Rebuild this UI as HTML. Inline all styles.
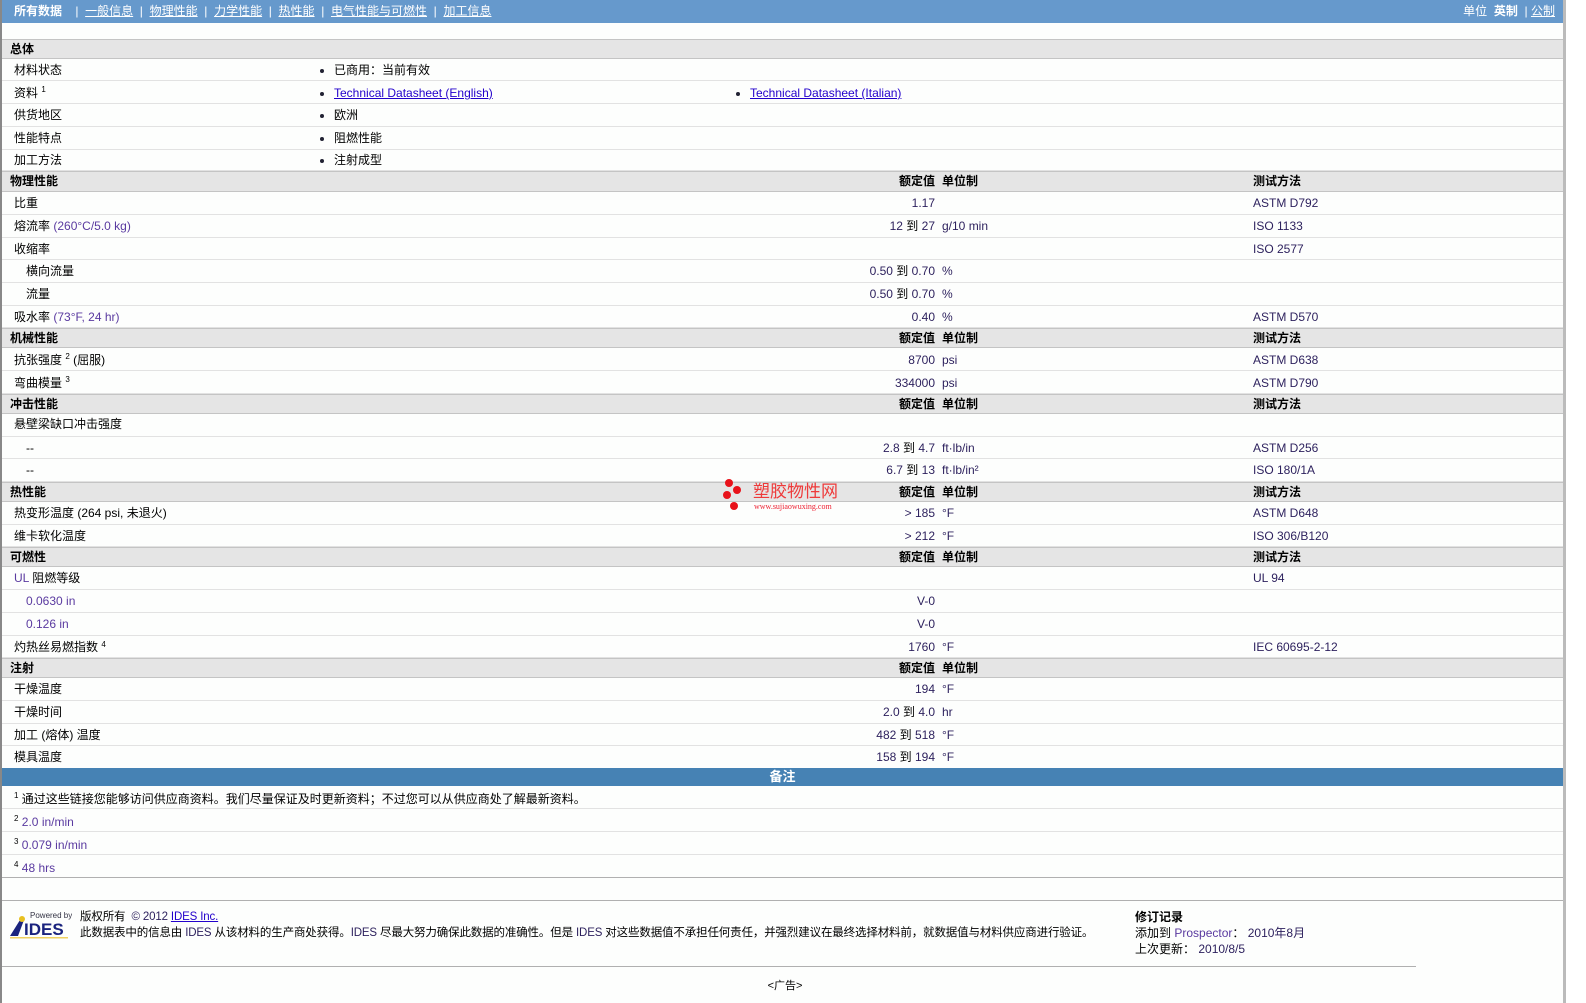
<!DOCTYPE html>
<html><head><meta charset="utf-8">
<style>
*{margin:0;padding:0;box-sizing:border-box}
body{width:1586px;height:1003px;background:#fff;font-family:"Liberation Sans","Noto Sans CJK SC",sans-serif;font-size:12px;color:#000;position:relative;overflow:hidden}
#wrap{position:absolute;left:0;top:0;width:1566px;height:1003px;border-left:2px solid #888;border-right:3px solid #bbb;background:#fdfefd}
.top{position:absolute;left:0;top:0;width:100%;height:23px;background:#6699cc;color:#fff;font-size:12px;line-height:22px}
.top a{color:#fff;text-decoration:underline}
.r{position:absolute;left:0;width:100%;border-bottom:1px solid #e2e2e2;white-space:nowrap}
.r span{position:absolute;top:0}
.s{background:#e5e5e5;border-top:1px solid #c4c4c4;border-bottom:1px solid #c4c4c4;font-weight:bold}
.l{left:12px}
.l2{left:24px}
.b{left:318px}
.b2{left:734px}
.v{right:628px;text-align:right}
.u{left:940px}
.t{left:1251px}
.d{display:inline-block;width:4px;height:4px;border-radius:2px;background:#223;margin-right:10px;vertical-align:middle}
.p{color:#2b1f5c}
.q{color:#5a3aa0}
a.k{color:#2200cc;text-decoration:underline}
sup{font-size:8px;vertical-align:top;position:relative;top:-3px}
</style></head><body>
<div id="wrap">
<div class="top">
<span style="position:absolute;left:12px;font-weight:bold">所有数据</span>
<span style="position:absolute;left:70px">&nbsp;|&nbsp; <a>一般信息</a> &nbsp;|&nbsp; <a>物理性能</a> &nbsp;|&nbsp; <a>力学性能</a> &nbsp;|&nbsp; <a>热性能</a> &nbsp;|&nbsp; <a>电气性能与可燃性</a> &nbsp;|&nbsp; <a>加工信息</a></span>
<span style="position:absolute;right:8px">单位 &nbsp;<b>英制</b> &nbsp;| <a>公制</a></span>
</div>

<div class="r s" style="top:39px;height:20px;line-height:18px"><span class="l" style="left:8px">总体</span></div>
<div class="r" style="top:59px;height:22px;line-height:22px"><span class="l">材料状态</span><span class="b"><i class="d"></i>已商用：当前有效</span></div>
<div class="r" style="top:81px;height:23px;line-height:24px"><span class="l">资料 <sup>1</sup></span><span class="b"><i class="d"></i><a class="k">Technical Datasheet (English)</a></span><span class="b2"><i class="d"></i><a class="k">Technical Datasheet (Italian)</a></span></div>
<div class="r" style="top:104px;height:23px;line-height:22px"><span class="l">供货地区</span><span class="b"><i class="d"></i>欧洲</span></div>
<div class="r" style="top:127px;height:23px;line-height:22px"><span class="l">性能特点</span><span class="b"><i class="d"></i>阻燃性能</span></div>
<div class="r" style="top:150px;height:21px;line-height:21px"><span class="l">加工方法</span><span class="b"><i class="d"></i>注射成型</span></div>

<div class="r s" style="top:171px;height:21px;line-height:19px"><span class="l" style="left:8px">物理性能</span><span class="v">额定值</span><span class="u">单位制</span><span class="t">测试方法</span></div>
<div class="r" style="top:192px;height:23px;line-height:23px"><span class="l">比重</span><span class="v p">1.17</span><span class="t p">ASTM D792</span></div>
<div class="r" style="top:215px;height:23px;line-height:23px"><span class="l">熔流率 <span class="q" style="position:static">(260°C/5.0 kg)</span></span><span class="v p">12 <b style="font-weight:normal;color:#000">到</b> 27</span><span class="u p">g/10 min</span><span class="t p">ISO 1133</span></div>
<div class="r" style="top:238px;height:22px;line-height:22px"><span class="l">收缩率</span><span class="t p">ISO 2577</span></div>
<div class="r" style="top:260px;height:23px;line-height:22px"><span class="l2">横向流量</span><span class="v p">0.50 <b style="font-weight:normal;color:#000">到</b> 0.70</span><span class="u p">%</span></div>
<div class="r" style="top:283px;height:23px;line-height:22px"><span class="l2">流量</span><span class="v p">0.50 <b style="font-weight:normal;color:#000">到</b> 0.70</span><span class="u p">%</span></div>
<div class="r" style="top:306px;height:22px;line-height:22px"><span class="l">吸水率 <span class="q" style="position:static">(73°F, 24 hr)</span></span><span class="v p">0.40</span><span class="u p">%</span><span class="t p">ASTM D570</span></div>

<div class="r s" style="top:328px;height:20px;line-height:18px"><span class="l" style="left:8px">机械性能</span><span class="v">额定值</span><span class="u">单位制</span><span class="t">测试方法</span></div>
<div class="r" style="top:348px;height:23px;line-height:24px"><span class="l">抗张强度 <sup>2</sup> (屈服)</span><span class="v p">8700</span><span class="u p">psi</span><span class="t p">ASTM D638</span></div>
<div class="r" style="top:371px;height:23px;line-height:24px"><span class="l">弯曲模量 <sup>3</sup></span><span class="v p">334000</span><span class="u p">psi</span><span class="t p">ASTM D790</span></div>

<div class="r s" style="top:394px;height:20px;line-height:18px"><span class="l" style="left:8px">冲击性能</span><span class="v">额定值</span><span class="u">单位制</span><span class="t">测试方法</span></div>
<div class="r" style="top:414px;height:23px;line-height:21px"><span class="l">悬壁梁缺口冲击强度</span></div>
<div class="r" style="top:437px;height:22px;line-height:22px"><span class="l2">--</span><span class="v p">2.8 <b style="font-weight:normal;color:#000">到</b> 4.7</span><span class="u p">ft·lb/in</span><span class="t p">ASTM D256</span></div>
<div class="r" style="top:459px;height:23px;line-height:23px"><span class="l2">--</span><span class="v p">6.7 <b style="font-weight:normal;color:#000">到</b> 13</span><span class="u p">ft·lb/in²</span><span class="t p">ISO 180/1A</span></div>

<div class="r s" style="top:482px;height:20px;line-height:18px"><span class="l" style="left:8px">热性能</span><span class="v">额定值</span><span class="u">单位制</span><span class="t">测试方法</span></div>
<div class="r" style="top:502px;height:23px;line-height:22px"><span class="l">热变形温度 (264 psi, 未退火)</span><span class="v p">&gt; 185</span><span class="u p">°F</span><span class="t p">ASTM D648</span></div>
<div class="r" style="top:525px;height:22px;line-height:22px"><span class="l">维卡软化温度</span><span class="v p">&gt; 212</span><span class="u p">°F</span><span class="t p">ISO 306/B120</span></div>

<div class="r s" style="top:547px;height:20px;line-height:18px"><span class="l" style="left:8px">可燃性</span><span class="v">额定值</span><span class="u">单位制</span><span class="t">测试方法</span></div>
<div class="r" style="top:567px;height:23px;line-height:22px"><span class="l"><span class="q" style="position:static">UL</span> 阻燃等级</span><span class="t p">UL 94</span></div>
<div class="r" style="top:590px;height:23px;line-height:23px"><span class="l2 q">0.0630 in</span><span class="v p">V-0</span></div>
<div class="r" style="top:613px;height:23px;line-height:23px"><span class="l2 q">0.126 in</span><span class="v p">V-0</span></div>
<div class="r" style="top:636px;height:22px;line-height:23px"><span class="l">灼热丝易燃指数 <sup>4</sup></span><span class="v p">1760</span><span class="u p">°F</span><span class="t p">IEC 60695-2-12</span></div>

<div class="r s" style="top:658px;height:20px;line-height:18px"><span class="l" style="left:8px">注射</span><span class="v">额定值</span><span class="u">单位制</span></div>
<div class="r" style="top:678px;height:23px;line-height:23px"><span class="l">干燥温度</span><span class="v p">194</span><span class="u p">°F</span></div>
<div class="r" style="top:701px;height:23px;line-height:23px"><span class="l">干燥时间</span><span class="v p">2.0 <b style="font-weight:normal;color:#000">到</b> 4.0</span><span class="u p">hr</span></div>
<div class="r" style="top:724px;height:22px;line-height:22px"><span class="l">加工 (熔体) 温度</span><span class="v p">482 <b style="font-weight:normal;color:#000">到</b> 518</span><span class="u p">°F</span></div>
<div class="r" style="top:746px;height:22px;line-height:22px;border-bottom:none"><span class="l">模具温度</span><span class="v p">158 <b style="font-weight:normal;color:#000">到</b> 194</span><span class="u p">°F</span></div>

<div style="position:absolute;left:0;top:768px;width:100%;height:18px;background:#4682b4;color:#fff;font-weight:bold;text-align:center;line-height:17px;font-size:13px">备注</div>
<div class="r" style="top:786px;height:23px;line-height:26px"><span class="l"><sup>1</sup> 通过这些链接您能够访问供应商资料。我们尽量保证及时更新资料；不过您可以从供应商处了解最新资料。</span></div>
<div class="r" style="top:809px;height:23px;line-height:26px"><span class="l"><sup>2</sup> <span class="q" style="position:static">2.0 in/min</span></span></div>
<div class="r" style="top:832px;height:23px;line-height:26px"><span class="l"><sup>3</sup> <span class="q" style="position:static">0.079 in/min</span></span></div>
<div class="r" style="top:855px;height:23px;line-height:26px;border-bottom:1px solid #b0b0b0"><span class="l"><sup>4</sup> <span class="q" style="position:static">48 hrs</span></span></div>
<div style="position:absolute;left:0;top:900px;width:100%;border-top:1px solid #b0b0b0"></div>

<svg style="position:absolute;left:720px;top:478px" width="20" height="34" viewBox="0 0 20 34">
<circle cx="7" cy="5" r="4" fill="#e8121a"/><circle cx="15" cy="12" r="4" fill="#e8121a"/><circle cx="5" cy="17" r="4" fill="#e8121a"/><circle cx="12" cy="28" r="4" fill="#e8121a"/></svg>
<div style="position:absolute;left:751px;top:482px;color:#ee3a3a;font-size:17px;line-height:20px">塑胶物性网</div>
<div style="position:absolute;left:752px;top:502px;color:#e23;font-size:8px;font-family:'Liberation Serif',serif">www.sujiaowuxing.com</div>

<svg style="position:absolute;left:6px;top:910px" width="64" height="30" viewBox="0 0 64 30">
<text x="22" y="8" font-size="8" fill="#334" font-family="Liberation Sans">Powered by</text>
<polygon points="2,26 12,10 16,10 10,26" fill="#1a237e"/><circle cx="14" cy="9" r="3" fill="#e8c020"/>
<text x="16" y="25" font-size="17" font-weight="bold" fill="#1a237e" font-family="Liberation Sans">IDES</text>
<rect x="2" y="27" width="58" height="1.5" fill="#f0d060"/></svg>
<div style="position:absolute;left:78px;top:909px;line-height:16px;font-size:11.5px;letter-spacing:-0.15px;white-space:nowrap">版权所有 &nbsp;<span class="p">© 2012</span> <a class="k">IDES Inc.</a><br>此数据表中的信息由 <span class="p">IDES</span> 从该材料的生产商处获得。<span class="p">IDES</span> 尽最大努力确保此数据的准确性。但是 <span class="p">IDES</span> 对这些数据值不承担任何责任，并强烈建议在最终选择材料前，就数据值与材料供应商进行验证。</div>
<div style="position:absolute;left:1133px;top:909px;line-height:16px"><b>修订记录</b><br>添加到 <span class="q">Prospector</span>： <span class="p">2010年8月</span><br>上次更新： <span class="p">2010/8/5</span></div>
<div style="position:absolute;left:0;top:966px;width:1414px;border-top:1px solid #b0b0b0"></div>
<div style="position:absolute;left:0;top:977px;width:1566px;text-align:center;font-size:11px">&lt;广告&gt;</div>
</div>
</body></html>
